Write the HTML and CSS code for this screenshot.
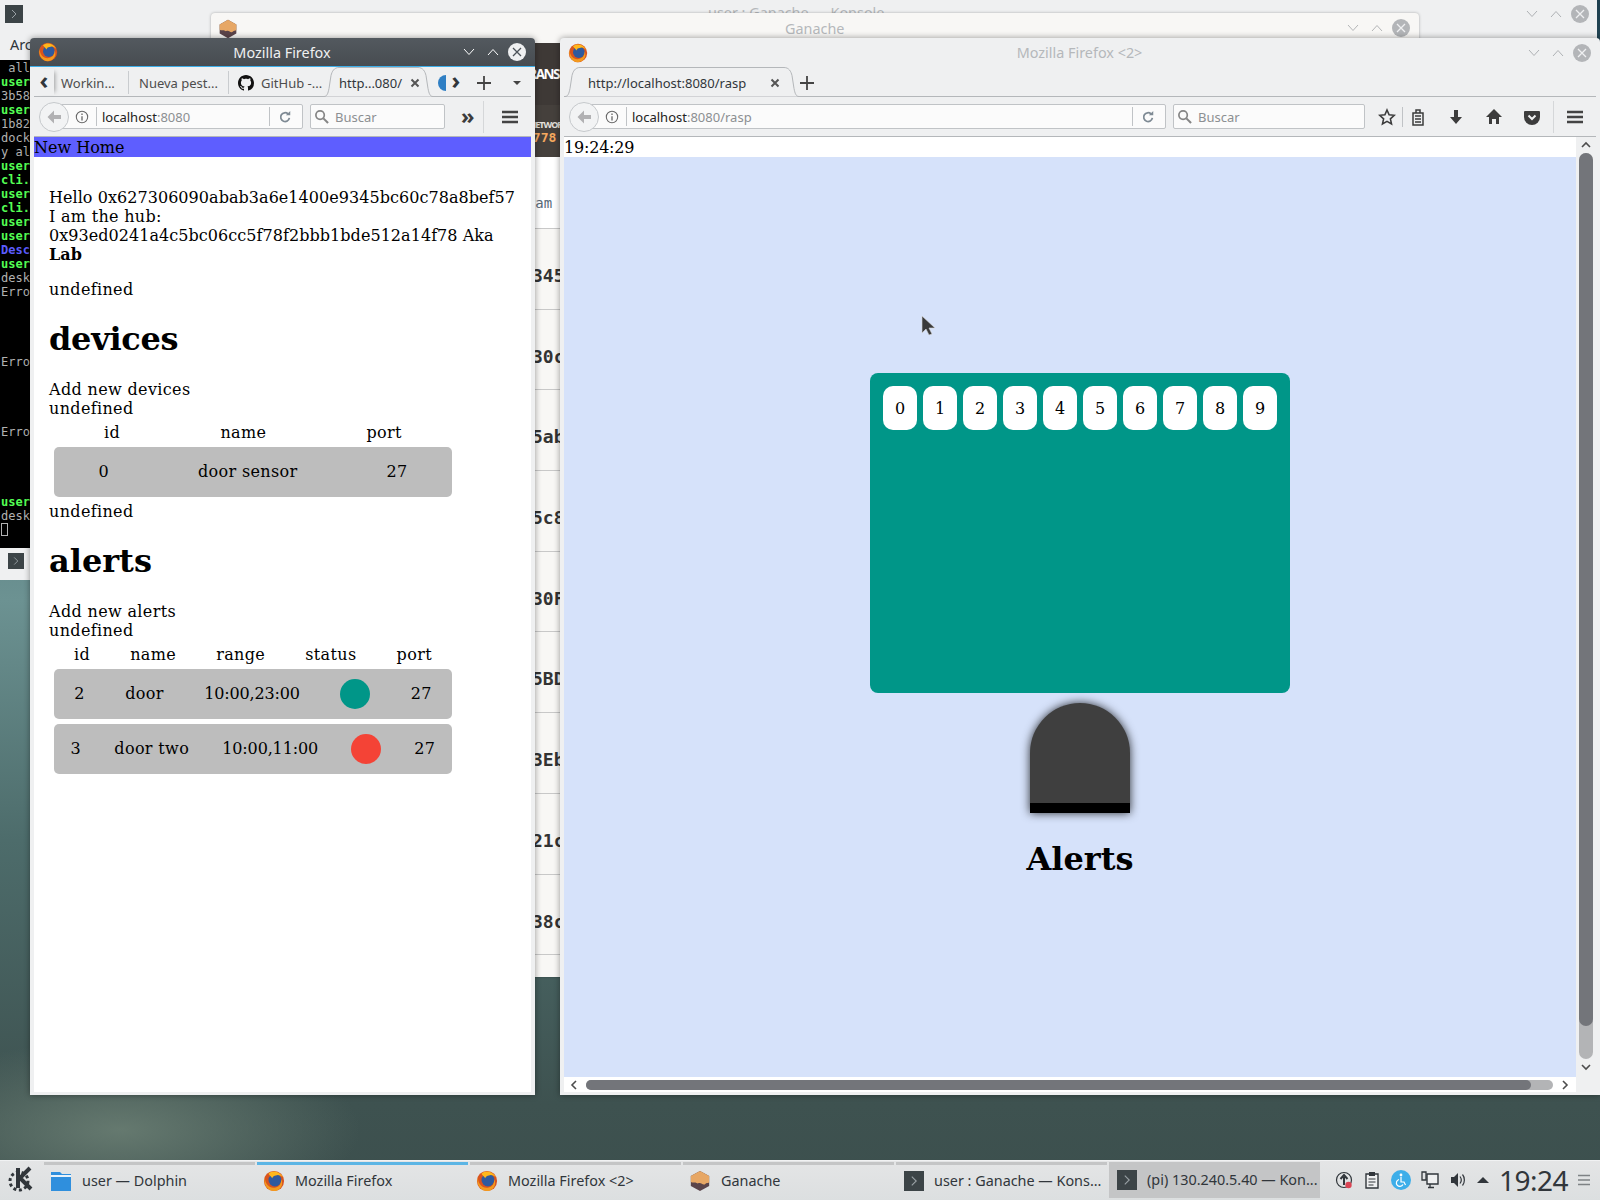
FILE: index.html
```html
<!DOCTYPE html>
<html lang="en">
<head>
    <meta charset="UTF-8">
    <meta name="viewport" content="width=device-width, initial-scale=1.0">
    <title>Desktop</title>
    <link rel="stylesheet" href="styles.css">
</head>
<body>
    <svg class="defs" width="0" height="0">
        <symbol id="i-firefox" viewBox="0 0 24 24">
            <circle cx="12" cy="12" r="11" fill="#d9541e"/>
            <circle cx="13" cy="11" r="7" fill="#2f5a9e"/>
            <path d="M2 8c0 8 6 13 12 11 4-1 6-4 6-9 3 7-2 13-8 13C5 23 0 16 2 8z" fill="#f39a1e"/>
            <path d="M6 4c4-4 12-3 16 4-4-3-6-3-8-2-2 0-3 1-4 3-1-2-3-3-4-5z" fill="#ffb81c"/>
        </symbol>
        <symbol id="i-ganache" viewBox="0 0 24 24">
            <path d="M12 1l10 5.500v11L12 23 2 17.500v-11z" fill="#5b444a"/>
            <path d="M12 1l10 5.500v7c-2 1-3 0-4 1.500s-3 1-4 0-3-1-4-.5-2-1-3-1-3 .5-5-.5v-6.500z" fill="#e7a765"/>
        </symbol>
        <symbol id="i-term" viewBox="0 0 18 18">
            <rect width="18" height="18" fill="#3c4447"/>
            <path d="M7 5l4 4-4 4" fill="none" stroke="#9aa1a5" stroke-width="1"/>
        </symbol>
        <symbol id="i-menu" viewBox="0 0 16 14">
            <path d="M0 2h16M0 7h16M0 12h16" stroke="#444" stroke-width="2.400" fill="none"/>
        </symbol>
        <symbol id="i-back" viewBox="0 0 16 16">
            <path d="M8 1.500L1.500 8 8 14.500v-4.500h7V6H8z" fill="#b1b1b3"/>
        </symbol>
        <symbol id="i-info" viewBox="0 0 16 16">
            <circle cx="8" cy="8" r="6.500" fill="none" stroke="#666" stroke-width="1.200"/>
            <path d="M8 7v5M8 4v1.600" stroke="#666" stroke-width="1.500"/>
        </symbol>
        <symbol id="i-reload" viewBox="0 0 16 16">
            <path d="M13 9a5 5 0 1 1-1.500-4.500" fill="none" stroke="#7e8a94" stroke-width="2"/>
            <path d="M9 6h5V1z" fill="#7e8a94"/>
        </symbol>
        <symbol id="i-search" viewBox="0 0 16 16">
            <circle cx="6.500" cy="6.500" r="4.500" fill="none" stroke="#858585" stroke-width="1.800"/>
            <path d="M10 10l5 5" stroke="#858585" stroke-width="2.200"/>
        </symbol>
        <symbol id="i-x" viewBox="0 0 10 10">
            <path d="M1.500 1.500l7 7M8.500 1.500l-7 7" stroke="#555" stroke-width="2" fill="none"/>
        </symbol>
        <symbol id="i-plus" viewBox="0 0 14 14">
            <path d="M7 0v14M0 7h14" stroke="#444" stroke-width="1.800"/>
        </symbol>
        <symbol id="i-down" viewBox="0 0 12 8">
            <path d="M1 1l5 5.500 5-5.500" fill="none" stroke="#4d5359" stroke-width="1"/>
        </symbol>
        <symbol id="i-up" viewBox="0 0 12 8">
            <path d="M1 7l5-5.500L11 7" fill="none" stroke="#4d5359" stroke-width="1"/>
        </symbol>
        <symbol id="i-close" viewBox="0 0 18 18">
            <circle cx="9" cy="9" r="9" fill="#eff0f1"/>
            <path d="M5 5l8 8M13 5l-8 8" stroke="#4d5359" stroke-width="1.300"/>
        </symbol>
        <symbol id="i-close-off" viewBox="0 0 18 18">
            <circle cx="9" cy="9" r="9" fill="#b3b5b8"/>
            <path d="M5 5l8 8M13 5l-8 8" stroke="#eff0f1" stroke-width="1.300"/>
        </symbol>
        <symbol id="i-github" viewBox="0 0 16 16">
            <path fill="#111" d="M8 0C3.580 0 0 3.580 0 8c0 3.540 2.290 6.530 5.470 7.590.4.070.55-.17.55-.38 0-.19-.01-.82-.01-1.490-2.010.37-2.530-.49-2.690-.94-.09-.23-.48-.94-.82-1.130-.28-.15-.68-.52-.01-.53.63-.01 1.080.58 1.230.82.72 1.210 1.870.87 2.330.66.070-.52.28-.87.51-1.070-1.780-.2-3.640-.89-3.640-3.950 0-.87.31-1.590.82-2.150-.08-.2-.36-1.020.08-2.120 0 0 .67-.21 2.200.82.64-.18 1.320-.27 2-.27.68 0 1.360.09 2 .27 1.530-1.040 2.200-.82 2.200-.82.44 1.100.16 1.920.08 2.120.51.56.82 1.270.82 2.150 0 3.070-1.870 3.750-3.650 3.950.29.25.54.73.54 1.480 0 1.070-.01 1.930-.01 2.200 0 .21.15.46.55.38A8.013 8.013 0 0016 8c0-4.420-3.580-8-8-8z"/>
        </symbol>
    </svg>

    <div class="desktop">

        <!-- windows at the back -->
        <div class="window konsole">
            <div class="konsole-title">
                <svg class="ico-18"><use href="#i-term"/></svg>
                <span class="konsole-name">user : Ganache — Konsole</span>
                <div class="win-btns off back-btns">
                    <svg class="ico-chev"><use href="#i-down"/></svg>
                    <svg class="ico-chev"><use href="#i-up"/></svg>
                    <svg class="ico-close"><use href="#i-close-off"/></svg>
                </div>
            </div>
            <div class="konsole-menu">Archivo</div>
            <pre class="terminal"> all
<b>user</b>
3b58
<b>user</b>
1b82
dock
y al
<b>user</b>
<b>cli.</b>
<b>user</b>
<b>cli.</b>
<b>user</b>
<b>user</b>
<i>Desc</i>
<b>user</b>
desk
Erro




Erro




Erro




<b>user</b>
desk
<span class="term-cursor"></span></pre>
            <div class="konsole-bar"><svg class="ico-16"><use href="#i-term"/></svg></div>
        </div>

        <div class="window ganache">
            <div class="gan-title">
                <svg class="ico-20 gan-ico"><use href="#i-ganache"/></svg>
                <span class="gan-name">Ganache</span>
                <div class="win-btns off">
                    <svg class="ico-chev"><use href="#i-down"/></svg>
                    <svg class="ico-chev"><use href="#i-up"/></svg>
                    <svg class="ico-close"><use href="#i-close-off"/></svg>
                </div>
            </div>
            <div class="gan-tabs">TRANS</div>
            <div class="gan-stats">
                <div class="gan-stat-label">NETWORK</div>
                <div class="gan-stat-value">5778</div>
            </div>
            <div class="gan-head">Param</div>
            <div class="gan-row">345</div>
            <div class="gan-row">30c</div>
            <div class="gan-row">5ab</div>
            <div class="gan-row">5c8</div>
            <div class="gan-row">30F</div>
            <div class="gan-row">5BD</div>
            <div class="gan-row">3Eb</div>
            <div class="gan-row">21c</div>
            <div class="gan-row">38c</div>
        </div>

        <!-- firefox on the left, the focused one -->
        <div class="window firefox ff-left">
            <div class="ff-title active">
                <svg class="ico-20"><use href="#i-firefox"/></svg>
                <span class="ff-name">Mozilla Firefox</span>
                <div class="win-btns on">
                    <svg class="ico-chev"><use href="#i-down"/></svg>
                    <svg class="ico-chev"><use href="#i-up"/></svg>
                    <svg class="ico-close"><use href="#i-close"/></svg>
                </div>
            </div>
            <div class="tabs">
                <span class="tab-arrow tab-arrow-left">‹</span>
                <div class="tab t-work">Workin...</div>
                <div class="tab t-nueva">Nueva pest...</div>
                <div class="tab t-git"><svg class="ico-16"><use href="#i-github"/></svg>GitHub -...</div>
                <div class="tab-on t-on">
                    <svg class="tab-shape" width="111" height="30" viewBox="0 0 111 30"><path d="M0 29.500h1c3 0 4-3 5-8l2-13c1-4 3-8 8-8h79c5 0 7 4 8 8l2 13c1 5 2 8 5 8h1" fill="#eff0f1" stroke="#b4b7ba"/></svg>
                    <span class="tab-text">http...080/</span>
                    <svg class="ico-x"><use href="#i-x"/></svg>
                </div>
                <div class="tab-clip"><span class="clip-dot"></span></div>
                <span class="tab-arrow">›</span>
                <svg class="ico-plus tab-plus"><use href="#i-plus"/></svg>
                <span class="tab-drop"></span>
            </div>
            <div class="nav">
                <div class="back"><svg class="ico-back"><use href="#i-back"/></svg></div>
                <div class="url url-left">
                    <svg class="ico-info"><use href="#i-info"/></svg>
                    <span class="url-sep"></span>
                    <span class="url-text">localhost<em>:8080</em></span>
                    <span class="url-sep"></span>
                    <svg class="ico-reload"><use href="#i-reload"/></svg>
                </div>
                <div class="search search-left">
                    <svg class="ico-search"><use href="#i-search"/></svg>
                    <span>Buscar</span>
                </div>
                <span class="more">»</span>
                <span class="nav-sep"></span>
                <svg class="ico-menu"><use href="#i-menu"/></svg>
            </div>
            <div class="page">
                <div class="topbar">New Home</div>
                <div class="page-body">
                    <p class="intro">Hello 0x627306090abab3a6e1400e9345bc60c78a8bef57<br>
                    <span class="hub">I am the hub:</span> 0x93ed0241a4c5bc06cc5f78f2bbb1bde512a14f78 Aka <b>Lab</b></p>
                    <div>undefined</div>
                    <h1 class="tight">devices</h1>
                    <div>Add new devices</div>
                    <div>undefined</div>
                    <div class="row-head">
                        <span>id</span><span>name</span><span>port</span>
                    </div>
                    <div class="row-card">
                        <span>0</span><span>door sensor</span><span>27</span>
                    </div>
                    <div>undefined</div>
                    <h1>alerts</h1>
                    <div>Add new alerts</div>
                    <div>undefined</div>
                    <div class="row-head">
                        <span>id</span><span>name</span><span>range</span><span>status</span><span>port</span>
                    </div>
                    <div class="row-card">
                        <span>2</span><span>door</span><span class="range">10:00,23:00</span><span class="dot green"></span><span>27</span>
                    </div>
                    <div class="row-card">
                        <span>3</span><span>door two</span><span class="range">10:00,11:00</span><span class="dot red"></span><span>27</span>
                    </div>
                </div>
            </div>
        </div>

        <!-- firefox on the right -->
        <div class="window firefox ff-right">
            <div class="ff-title">
                <svg class="ico-20"><use href="#i-firefox"/></svg>
                <span class="ff-name">Mozilla Firefox &lt;2&gt;</span>
                <div class="win-btns off">
                    <svg class="ico-chev"><use href="#i-down"/></svg>
                    <svg class="ico-chev"><use href="#i-up"/></svg>
                    <svg class="ico-close"><use href="#i-close-off"/></svg>
                </div>
            </div>
            <div class="tabs">
                <div class="tab-on t-rasp">
                    <svg class="tab-shape" width="236" height="30" viewBox="0 0 236 30"><path d="M0 29.500h1c3 0 4-3 5-8l2-13c1-4 3-8 8-8h204c5 0 7 4 8 8l2 13c1 5 2 8 5 8h1" fill="#eff0f1" stroke="#b4b7ba"/></svg>
                    <span class="tab-text">http://localhost:8080/rasp</span>
                    <svg class="ico-x"><use href="#i-x"/></svg>
                </div>
                <svg class="ico-plus rasp-plus"><use href="#i-plus"/></svg>
            </div>
            <div class="nav">
                <div class="back"><svg class="ico-back"><use href="#i-back"/></svg></div>
                <div class="url url-right">
                    <svg class="ico-info"><use href="#i-info"/></svg>
                    <span class="url-sep"></span>
                    <span class="url-text">localhost<em>:8080/rasp</em></span>
                    <span class="url-sep"></span>
                    <svg class="ico-reload"><use href="#i-reload"/></svg>
                </div>
                <div class="search search-right">
                    <svg class="ico-search"><use href="#i-search"/></svg>
                    <span>Buscar</span>
                </div>
                <svg class="tool t-star" viewBox="0 0 18 18"><path d="M9 2l2.100 4.800 5.200.5-3.900 3.500 1.100 5.100L9 13.300l-4.500 2.600 1.100-5.100-3.900-3.500 5.200-.5z" fill="none" stroke="#3c3c3c" stroke-width="1.600"/></svg>
                <span class="tool-sep"></span>
                <svg class="tool t-clip" viewBox="0 0 18 18"><path d="M4 5h10v12H4zM7 5V2h4v3M6 8h6M6 11h6M6 14h6" fill="none" stroke="#3c3c3c" stroke-width="1.500"/></svg>
                <svg class="tool t-dl" viewBox="0 0 18 18"><path d="M7 2h4v7h4l-6 7-6-7h4z" fill="#3c3c3c"/></svg>
                <svg class="tool t-home" viewBox="0 0 18 18"><path d="M9 1l8 8h-3v7h-3v-5H7v5H4V9H1z" fill="#3c3c3c"/></svg>
                <svg class="tool t-pocket" viewBox="0 0 18 18"><path d="M2 3h14a1 1 0 0 1 1 1v5a8 8 0 0 1-16 0V4a1 1 0 0 1 1-1z" fill="#3c3c3c"/><path d="M5.500 7.500L9 11l3.500-3.500" fill="none" stroke="#eff0f1" stroke-width="2"/></svg>
                <span class="nav-sep"></span>
                <svg class="ico-menu"><use href="#i-menu"/></svg>
            </div>
            <div class="page rasp">
                <div class="rasp-view">
                    <div class="rasp-time">19:24:29</div>
                    <div class="rasp-stage">
                        <div class="panel">
                            <span class="key">0</span><span class="key">1</span><span class="key">2</span><span class="key">3</span><span class="key">4</span><span class="key">5</span><span class="key">6</span><span class="key">7</span><span class="key">8</span><span class="key">9</span>
                        </div>
                        <div class="bell"></div>
                        <h1 class="bell-title">Alerts</h1>
                    </div>
                    <div class="hbar">
                        <svg class="sb-arrow" viewBox="0 0 8 10"><path d="M6 1L2 5l4 4" fill="none" stroke="#4d4d4d" stroke-width="1.600"/></svg>
                        <div class="track track-h"><div class="thumb-h"></div></div>
                        <svg class="sb-arrow" viewBox="0 0 8 10"><path d="M2 1l4 4-4 4" fill="none" stroke="#4d4d4d" stroke-width="1.600"/></svg>
                    </div>
                </div>
                <div class="vbar">
                    <svg class="sb-arrow-v" viewBox="0 0 10 8"><path d="M1 6l4-4 4 4" fill="none" stroke="#4d4d4d" stroke-width="1.600"/></svg>
                    <div class="track track-v"><div class="thumb-v"></div></div>
                    <svg class="sb-arrow-v" viewBox="0 0 10 8"><path d="M1 2l4 4 4-4" fill="none" stroke="#4d4d4d" stroke-width="1.600"/></svg>
                </div>
            </div>
        </div>

        <svg class="mouse" width="16" height="22" viewBox="0 0 16 22"><path d="M1 1v17l4-4 3 6 3-1-3-6h6z" fill="#3a3a3a" stroke="#d9d9d9" stroke-width=".6"/></svg>

        <!-- panel -->
        <div class="taskbar">
            <svg class="kmenu" viewBox="0 0 26 28">
                <circle cx="12" cy="15" r="9" fill="none" stroke="#31363b" stroke-width="3" stroke-dasharray="3 2.600"/>
                <path d="M11 2v20M23 2l-10 10 11 11" fill="none" stroke="#31363b" stroke-width="4"/>
            </svg>
            <div class="task">
                <svg class="ico-22" viewBox="0 0 22 22"><path d="M1 2h9l2 2h9v17H1z" fill="#2f8fdd"/><path d="M1 5h20v2H1z" fill="#e8f3fb"/></svg>
                <span>user — Dolphin</span>
            </div>
            <div class="task is-on">
                <svg class="ico-22"><use href="#i-firefox"/></svg>
                <span>Mozilla Firefox</span>
            </div>
            <div class="task">
                <svg class="ico-22"><use href="#i-firefox"/></svg>
                <span>Mozilla Firefox &lt;2&gt;</span>
            </div>
            <div class="task">
                <svg class="ico-22"><use href="#i-ganache"/></svg>
                <span>Ganache</span>
            </div>
            <div class="task is-term">
                <svg class="ico-20"><use href="#i-term"/></svg>
                <span>user : Ganache — Kons...</span>
            </div>
            <div class="task is-term is-open">
                <svg class="ico-20"><use href="#i-term"/></svg>
                <span>(pi) 130.240.5.40 — Kon...</span>
            </div>
            <div class="tray">
                <svg class="ico-18" viewBox="0 0 18 18"><circle cx="9" cy="9" r="7.500" fill="none" stroke="#31363b" stroke-width="1.200"/><path d="M9 14V6M5.500 8L9 4l3.500 4" fill="none" stroke="#31363b" stroke-width="2"/><circle cx="13.500" cy="14" r="3.200" fill="#da4453"/></svg>
                <svg class="ico-18" viewBox="0 0 18 18"><path d="M3 3h12v14H3z" fill="#eff0f1" stroke="#31363b" stroke-width="1.400"/><path d="M6 1h6v4H6z" fill="#31363b"/><path d="M5.500 8h7M5.500 11h7M5.500 14h5" stroke="#31363b"/></svg>
                <svg class="ico-20" viewBox="0 0 20 20"><circle cx="10" cy="10" r="10" fill="#3daee9"/><circle cx="10" cy="5" r="1.400" fill="#fff"/><path d="M10 7v5h3l1.500 3M8 9.500a3.500 3.500 0 1 0 4 5" fill="none" stroke="#fff" stroke-width="1.200"/></svg>
                <svg class="ico-18" viewBox="0 0 18 18"><path d="M6 3h11v10H6z" fill="#eff0f1" stroke="#31363b" stroke-width="1.400"/><path d="M1 1h4v8H1zM9 13v3M7 16.500h6" fill="none" stroke="#31363b" stroke-width="1.300"/></svg>
                <svg class="ico-18" viewBox="0 0 18 18"><path d="M2 6h3l4-4v14l-4-4H2z" fill="#31363b"/><path d="M11 5.500c1.500 2 1.500 5 0 7M13.500 3.500c2.500 3 2.500 8 0 11" fill="none" stroke="#31363b" stroke-width="1.200"/></svg>
                <span class="tray-up"></span>
                <span class="clock">19:24</span>
                <svg class="tray-menu" viewBox="0 0 12 12"><path d="M0 1.500h12M0 6h12M0 10.500h12" stroke="#7e8285" stroke-width="1.400"/></svg>
            </div>
        </div>
    </div>
</body>
</html>
```

FILE: styles.css
```css
* {
    box-sizing: border-box;
}
html, body {
    margin: 0;
    padding: 0;
    overflow: hidden;
}
.defs {
    position: absolute;
}
.desktop {
    position: relative;
    width: 1600px;
    height: 1200px;
    overflow: hidden;
    font-family: 'Noto Sans', sans-serif;
    font-size: 14.400px;
    color: #31363b;
    background:
        radial-gradient(ellipse 240px 90px at 120px 1130px, #65796f 0%, rgba(101, 121, 111, 0) 100%),
        linear-gradient(180deg, #1d3f4f 0%, #6c9292 50%, #4d6c6b 70%, #3e5250 92%, #3c4f4d 100%);
}
svg {
    flex: none;
    display: block;
}
.window {
    position: absolute;
    background: #eff0f1;
}

/* konsole behind */
.konsole {
    left: 0;
    top: 0;
    width: 1597px;
    height: 580px;
}
.konsole-title {
    height: 35px;
    display: flex;
    align-items: flex-start;
    padding: 5px 0 0 5px;
    position: relative;
}
.konsole-name {
    position: absolute;
    left: 708px;
    top: 3px;
    color: #b5b8bb;
}
.back-btns {
    margin-left: auto;
    margin-right: 8px;
}
.konsole-menu {
    height: 25px;
    padding-left: 10px;
    line-height: 20px;
}
.terminal {
    margin: 0;
    height: 488px;
    padding: 1px 0 0 1px;
    background: #000;
    color: #b2b2b2;
    font-family: 'DejaVu Sans Mono', monospace;
    font-size: 12px;
    line-height: 14px;
}
.terminal b {
    color: #54ff54;
}
.terminal i {
    font-style: normal;
    font-weight: bold;
    color: #5c5cff;
}
.term-cursor {
    display: inline-block;
    width: 7px;
    height: 13px;
    border: 1px solid #b2b2b2;
    vertical-align: -2px;
}
.konsole-bar {
    height: 32px;
    padding: 5px 0 0 8px;
}

/* ganache behind */
.ganache {
    left: 211px;
    top: 13px;
    width: 1208px;
    height: 964px;
    border-radius: 4px 4px 0 0;
    box-shadow: 0 0 3px rgba(0, 0, 0, 0.3);
    background: #f8f7f5;
}
.gan-title {
    height: 30px;
    display: flex;
    align-items: center;
    padding: 0 9px 0 8px;
    position: relative;
    justify-content: flex-end;
}
.gan-ico {
    position: absolute;
    left: 7px;
    top: 6px;
}
.gan-name {
    position: absolute;
    left: 574px;
    top: 6px;
    color: #b5b8bb;
}
.gan-tabs {
    height: 62px;
    background: #3e3936;
    color: #fff;
    font-weight: bold;
    font-size: 13.500px;
    letter-spacing: -1.500px;
    padding: 22px 0 0 311px;
    white-space: nowrap;
}
.gan-stats {
    height: 52px;
    background: #45403c;
    padding: 14px 0 0 318px;
    white-space: nowrap;
}
.gan-stat-label {
    color: #e4e0dc;
    font-size: 9px;
    font-weight: bold;
    line-height: 12px;
    letter-spacing: -1px;
}
.gan-stat-value {
    color: #f5a85e;
    font-family: 'DejaVu Sans Mono', monospace;
    font-weight: bold;
    font-size: 13px;
    line-height: 14px;
    margin-left: -4px;
}
.gan-head {
    height: 72px;
    background: #fff;
    border-bottom: 1px solid #c8c8c8;
    padding: 38px 0 0 299px;
    color: #596a7a;
    font-family: 'DejaVu Sans Mono', monospace;
    font-size: 14px;
}
.gan-row {
    height: 80.700px;
    border-bottom: 1px solid #c8c8c8;
    padding: 36px 0 0 321px;
    color: #333;
    font-family: 'DejaVu Sans Mono', monospace;
    font-weight: bold;
    font-size: 18px;
    line-height: 22px;
}

/* firefox frame */
.firefox {
    top: 38px;
    height: 1057px;
    padding: 0 4px 3px;
    border-radius: 4px 4px 0 0;
    box-shadow: 0 0 6px rgba(0, 0, 0, 0.4);
    display: flex;
    flex-direction: column;
}
.ff-left {
    left: 30px;
    width: 505px;
}
.ff-right {
    left: 560px;
    width: 1040px;
}
.ff-title {
    height: 29px;
    flex: none;
    margin: 0 -4px;
    padding: 0 9px 0 8px;
    display: grid;
    grid-template-columns: 1fr auto 1fr;
    align-items: center;
    color: #b5b8bb;
    border-radius: 4px 4px 0 0;
}
.ff-title.active {
    background: linear-gradient(180deg, #53595f, #474c51);
    color: #eff0f1;
    border-bottom: 1px solid #3daee9;
}
.win-btns {
    justify-self: end;
    display: flex;
    align-items: center;
    gap: 12.500px;
}
.win-btns .ico-close {
    margin-left: -3.500px;
}
.ico-chev {
    width: 12px;
    height: 8px;
}
.off .ico-chev {
    opacity: 0.4;
}
.on .ico-chev {
    filter: invert(1) brightness(1.6);
}
.ico-close {
    width: 18px;
    height: 18px;
}
.ico-16 {
    width: 16px;
    height: 16px;
}
.ico-18 {
    width: 18px;
    height: 18px;
}
.ico-20 {
    width: 20px;
    height: 20px;
}
.ico-22 {
    width: 22px;
    height: 22px;
}

/* tabs */
.tabs {
    height: 30px;
    flex: none;
    display: flex;
    align-items: center;
    border-bottom: 1px solid #b4b7ba;
    font-size: 13px;
    white-space: nowrap;
}
.tab-arrow {
    width: 20px;
    flex: none;
    text-align: center;
    font-size: 24px;
    line-height: 24px;
    font-weight: bold;
    margin-top: -3px;
}
.tab-arrow-left {
    box-shadow: 4px 0 4px -3px rgba(0, 0, 0, 0.35);
    margin-top: 0;
    height: 26px;
    line-height: 21px;
}
.tab {
    height: 23px;
    display: flex;
    align-items: center;
    gap: 7px;
    color: #4d4d4d;
    flex: none;
    border-right: 1px solid #c9cccf;
    margin-top: 2px;
}
.t-work {
    width: 75px;
    padding-left: 7px;
}
.t-nueva {
    width: 100px;
    padding-left: 10px;
}
.t-git {
    width: 94px;
    padding-left: 9px;
    border-right: 0;
}
.tab-on {
    position: relative;
    height: 30px;
    flex: none;
    display: flex;
    align-items: center;
    margin-bottom: -1px;
}
.tab-shape {
    position: absolute;
    left: 0;
    top: 0;
}
.tab-text {
    position: relative;
    color: #31363b;
    margin-top: 2px;
}
.t-on {
    width: 111px;
    padding-left: 16px;
}
.t-on .ico-x {
    margin-left: 8px;
}
.t-rasp {
    width: 236px;
    padding-left: 24px;
}
.t-rasp .ico-x {
    margin-left: 24px;
}
.ico-x {
    position: relative;
    width: 10px;
    height: 10px;
    margin-top: 2px;
}
.tab-clip {
    width: 12px;
    height: 22px;
    flex: none;
    overflow: hidden;
    margin-top: 2px;
}
.clip-dot {
    display: block;
    width: 16px;
    height: 16px;
    margin: 3px 0 0 4px;
    border-radius: 50%;
    background: #2f7fc4;
}
.ico-plus {
    width: 14px;
    height: 14px;
    margin-top: 2px;
}
.tab-plus {
    margin-left: 11px;
}
.tab-drop {
    width: 0;
    height: 0;
    margin-left: 22px;
    margin-top: 2px;
    border: 4px solid transparent;
    border-top: 4px solid #444;
    border-bottom: 0;
}
.rasp-plus {
    margin-left: 0;
}

/* nav bar */
.nav {
    height: 40px;
    flex: none;
    display: flex;
    align-items: center;
    padding-left: 5px;
    border-bottom: 1px solid #b4b7ba;
}
.back {
    position: relative;
    z-index: 1;
    width: 30px;
    height: 30px;
    flex: none;
    margin-right: -11px;
    display: flex;
    align-items: center;
    justify-content: center;
    border-radius: 50%;
    background: #f2f3f4;
    border: 1px solid #c6c9cc;
}
.ico-back {
    width: 16px;
    height: 16px;
}
.url, .search {
    height: 25px;
    flex: none;
    display: flex;
    align-items: center;
    background: #fbfbfb;
    border: 1px solid #c0c3c6;
    border-radius: 2px;
    font-size: 13px;
    white-space: nowrap;
}
.url {
    padding-left: 16px;
    color: #222;
}
.url-left {
    width: 245px;
}
.url-right {
    width: 578px;
}
.ico-info {
    width: 14px;
    height: 14px;
    margin-right: 7px;
}
.url-sep {
    width: 1px;
    height: 19px;
    background: #c0c3c6;
    flex: none;
}
.url-text {
    flex: 1;
    padding-left: 5px;
}
.url-text em {
    font-style: normal;
    color: #8c8f92;
}
.ico-reload {
    width: 14px;
    height: 14px;
    margin: 0 10px 0 8px;
}
.search {
    margin-left: 7px;
    padding-left: 3px;
    gap: 6px;
    color: #8c8f92;
}
.search-left {
    width: 135px;
}
.search-right {
    width: 192px;
}
.ico-search {
    width: 15px;
    height: 15px;
}
.more {
    margin-left: 16px;
    font-size: 22px;
    line-height: 22px;
    font-weight: bold;
    color: #3c3c3c;
    width: 14px;
    margin-top: -4px;
}
.nav-sep {
    width: 1px;
    height: 32px;
    margin-left: 8px;
    background: #d5d7d9;
    flex: none;
}
.ico-menu {
    width: 16px;
    height: 14px;
    margin-left: 18px;
}
.tool {
    width: 18px;
    height: 18px;
}
.t-star {
    margin-left: 13px;
}
.tool-sep {
    width: 1px;
    height: 20px;
    margin-left: 6px;
    background: #c0c3c6;
}
.t-clip {
    margin-left: 6px;
}
.t-dl, .t-home, .t-pocket {
    margin-left: 20px;
}
.ff-right .nav-sep {
    margin-left: 12px;
}
.ff-right .ico-menu {
    margin-left: 13px;
}

/* left page */
.page {
    flex: 1;
    background: #fff;
    color: #000;
    font-family: 'DejaVu Serif', serif;
    font-size: 16px;
    line-height: 19px;
}
.topbar {
    height: 20px;
    padding-top: 1px;
    background: #5e5eff;
}
.page-body {
    padding: 0 15px;
    letter-spacing: 0.350px;
}
.intro {
    margin: 31px 0 16px;
    letter-spacing: 0.050px;
}
.hub {
    letter-spacing: 0.300px;
}
h1 {
    font-size: 32px;
    line-height: 37px;
    margin: 22px 0;
    letter-spacing: 0;
}
h1.tight {
    letter-spacing: -0.300px;
}
.row-head, .row-card {
    display: flex;
    justify-content: space-around;
    align-items: center;
    width: 398px;
    margin-left: 5px;
}
.row-head {
    height: 19px;
    margin-top: 5px;
}
.row-card {
    height: 50px;
    margin-top: 5px;
    margin-bottom: 5px;
    background: #bdbdbd;
    border-radius: 5px;
}
.row-card span {
    padding-bottom: 2px;
}
.row-card + .row-card {
    margin-top: 0;
}
.range {
    letter-spacing: -0.150px;
}
.row-card .dot {
    width: 30px;
    height: 30px;
    padding: 0;
    border-radius: 50%;
}
.green {
    background: #009688;
}
.red {
    background: #f44336;
}

/* right page */
.rasp {
    display: flex;
    min-height: 0;
}
.rasp-view {
    width: 1012px;
    flex: none;
    display: flex;
    flex-direction: column;
    overflow: hidden;
}
.rasp-time {
    height: 20px;
    flex: none;
    padding-top: 1px;
    letter-spacing: -0.200px;
}
.rasp-stage {
    width: 1032px;
    flex: 1;
    background: #d6e2fa;
    display: flex;
    flex-direction: column;
    align-items: center;
    padding-top: 216px;
}
.panel {
    width: 420px;
    height: 320px;
    flex: none;
    background: #009688;
    border-radius: 8px;
    padding: 13px;
    display: flex;
    align-items: flex-start;
    gap: 6px;
}
.key {
    width: 34px;
    height: 44px;
    flex: none;
    display: flex;
    align-items: center;
    justify-content: center;
    background: #fff;
    border-radius: 10px;
}
.bell {
    width: 100px;
    height: 110px;
    flex: none;
    margin-top: 10px;
    background: #3f3f3f;
    border-bottom: 10px solid #000;
    border-radius: 50px 50px 0 0;
    box-shadow: 0 0 10px rgba(0, 0, 0, 0.8);
}
.bell-title {
    margin: 28px 0 0;
}
.hbar {
    height: 15px;
    flex: none;
    display: flex;
    align-items: center;
    background: #fff;
    padding-left: 6px;
}
.sb-arrow {
    width: 8px;
    height: 10px;
}
.track-h {
    width: 967px;
    height: 10px;
    margin: 0 8px;
    background: #b3b4b6;
    border-radius: 5px;
}
.thumb-h {
    width: 945px;
    height: 10px;
    background: #73757a;
    border-radius: 5px;
}
.vbar {
    width: 20px;
    flex: none;
    background: #eff0f1;
    display: flex;
    flex-direction: column;
    align-items: center;
    padding: 4px 0 0;
}
.sb-arrow-v {
    width: 10px;
    height: 8px;
}
.track-v {
    width: 14px;
    height: 906px;
    margin: 4px 0;
    background: #b3b4b6;
    border-radius: 7px;
}
.thumb-v {
    width: 14px;
    height: 873px;
    background: #73757a;
    border-radius: 7px;
}
.mouse {
    position: absolute;
    left: 921px;
    top: 315px;
}

/* task bar */
.taskbar {
    position: absolute;
    left: 0;
    right: 0;
    bottom: 0;
    height: 40px;
    display: flex;
    align-items: stretch;
    background: linear-gradient(180deg, #e4e5e6, #dcdfe0);
    border-top: 1px solid #f1f2f3;
    padding-top: 1px;
}
.kmenu {
    width: 26px;
    height: 28px;
    margin: 4px 11px 0 7px;
}
.task {
    width: 211px;
    margin-right: 2px;
    display: flex;
    align-items: center;
    gap: 10px;
    padding-left: 6px;
    border-top: 3px solid #c4c5c6;
    white-space: nowrap;
    flex: none;
    padding-bottom: 4px;
}
.task.is-on {
    border-top-color: #5cb5e5;
}
.task.is-term {
    padding-left: 8px;
}
.task.is-open {
    background: #c4c5c6;
    margin-bottom: 2px;
    margin-right: 0;
}
.tray {
    display: flex;
    align-items: center;
    gap: 10px;
    padding-left: 15px;
    padding-bottom: 3px;
}
.tray-up {
    width: 0;
    height: 0;
    border: 6px solid transparent;
    border-bottom: 6px solid #31363b;
    border-top: 0;
}
.clock {
    font-size: 28px;
    line-height: 34px;
    letter-spacing: -0.500px;
}
.tray-menu {
    width: 12px;
    height: 12px;
}
```
